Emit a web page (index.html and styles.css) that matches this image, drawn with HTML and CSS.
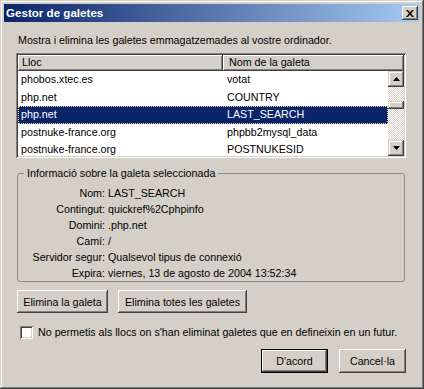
FILE: index.html
```html
<!DOCTYPE html>
<html lang="ca">
<head>
<meta charset="utf-8">
<title>Gestor de galetes</title>
<link rel="stylesheet" href="styles.css">
</head>
<body>
<div class="window">
  <div class="titlebar">
    <span class="title">Gestor de galetes</span>
    <button class="close" type="button" aria-label="Tanca">
      <svg width="8" height="7" viewBox="0 0 8 7"><path d="M0 0h2l2 2.5L6 0h2L5 3.5 8 7H6L4 4.5 2 7H0l3-3.5z" fill="#000"/></svg>
    </button>
  </div>
  <div class="content">
    <p class="desc">Mostra i elimina les galetes emmagatzemades al vostre ordinador.</p>
    <div class="tree">
      <div class="thead">
        <div class="th c1">Lloc</div>
        <div class="th c2">Nom de la galeta</div>
      </div>
      <div class="tbody">
        <div class="rows">
          <div class="row"><span class="c1">phobos.xtec.es</span><span class="c2">votat</span></div>
          <div class="row"><span class="c1">php.net</span><span class="c2">COUNTRY</span></div>
          <div class="row sel"><span class="c1">php.net</span><span class="c2">LAST_SEARCH</span></div>
          <div class="row"><span class="c1">postnuke-france.org</span><span class="c2">phpbb2mysql_data</span></div>
          <div class="row"><span class="c1">postnuke-france.org</span><span class="c2">POSTNUKESID</span></div>
        </div>
        <div class="scrollbar">
          <div class="sbtn"><svg width="7" height="4" viewBox="0 0 7 4"><path d="M3.5 0L7 4H0z" fill="#000"/></svg></div>
          <div class="track t1"></div>
          <div class="thumb"></div>
          <div class="track t2"></div>
          <div class="sbtn"><svg width="7" height="4" viewBox="0 0 7 4"><path d="M0 0h7L3.5 4z" fill="#000"/></svg></div>
        </div>
      </div>
    </div>
    <fieldset class="group">
      <legend>Informació sobre la galeta seleccionada</legend>
      <div class="info">
        <span class="lbl">Nom:</span><span class="val">LAST_SEARCH</span>
        <span class="lbl">Contingut:</span><span class="val">quickref%2Cphpinfo</span>
        <span class="lbl">Domini:</span><span class="val">.php.net</span>
        <span class="lbl">Camí:</span><span class="val">/</span>
        <span class="lbl">Servidor segur:</span><span class="val">Qualsevol tipus de connexió</span>
        <span class="lbl">Expira:</span><span class="val">viernes, 13 de agosto de 2004 13:52:34</span>
      </div>
    </fieldset>
    <div class="actions">
      <button class="btn b1" type="button">Elimina la galeta</button>
      <button class="btn b2" type="button">Elimina totes les galetes</button>
    </div>
    <label class="check"><span class="box"></span><span>No permetis als llocs on s'han eliminat galetes que en defineixin en un futur.</span></label>
    <div class="footer">
      <button class="btn ok" type="button">D'acord</button>
      <button class="btn cancel" type="button">Cancel·la</button>
    </div>
  </div>
</div>
</body>
</html>
```
FILE: styles.css
```css
html, body {
  margin: 0;
  padding: 0;
  background: #d4d0c8;
}
body {
  font-family: "Liberation Sans", Arial, sans-serif;
  font-size: 10.7px;
  color: #000;
}
.window {
  width: 424px;
  height: 389px;
  box-sizing: border-box;
  padding: 4px;
  background: #d4d0c8;
  box-shadow: inset -1px -1px #404040, inset 1px 1px #d4d0c8, inset -2px -2px #808080, inset 2px 2px #fff;
}
.titlebar {
  height: 18px;
  display: flex;
  align-items: center;
  justify-content: space-between;
  background: linear-gradient(to right, #0a246a, #a6caf0);
  padding: 0 2px 0 2px;
}
.title {
  color: #fff;
  font-weight: bold;
  font-size: 11.6px;
  line-height: 18px;
}
.close {
  width: 16px;
  height: 14px;
  padding: 0;
  border: 0;
  background: #d4d0c8;
  display: flex;
  align-items: center;
  justify-content: center;
  box-shadow: inset -1px -1px #404040, inset 1px 1px #fff, inset -2px -2px #808080;
}
.close svg { display: block; margin-left: -1px; }
.content {
  padding: 11px 14px 0 12px;
}
.desc {
  margin: 0 0 6px 2px;
  line-height: 14px;
}
.tree {
  width: 390px;
  height: 105px;
  box-sizing: border-box;
  padding: 2px;
  background: #fff;
  box-shadow: inset 1px 1px #808080, inset -1px -1px #fff, inset 2px 2px #404040, inset -2px -2px #d4d0c8;
  display: flex;
  flex-direction: column;
}
.thead {
  display: flex;
  height: 16px;
}
.th {
  box-sizing: border-box;
  height: 16px;
  line-height: 15px;
  background: #d4d0c8;
  box-shadow: inset -1px -1px #404040, inset 1px 1px #fff, inset -2px -2px #808080;
  white-space: nowrap;
}
.th.c1 { width: 205px; padding-left: 4px; }
.th.c2 { flex: 1; padding-left: 6px; }
.tbody {
  flex: 1;
  display: flex;
  overflow: hidden;
}
.rows {
  width: 370px;
  overflow: hidden;
}
.row {
  display: flex;
  height: 17.5px;
  line-height: 17.5px;
  box-sizing: border-box;
  white-space: nowrap;
}
.row .c1 { width: 205px; padding-left: 3px; box-sizing: border-box; }
.row .c2 { flex: 1; padding-left: 4px; }
.row.sel {
  background: #0a246a;
  color: #fff;
  outline: 1px dotted #f5db95;
  outline-offset: -1px;
}
.scrollbar {
  width: 16px;
  display: flex;
  flex-direction: column;
}
.sbtn {
  height: 16px;
  flex: none;
  background: #d4d0c8;
  box-shadow: inset -1px -1px #404040, inset 1px 1px #d4d0c8, inset -2px -2px #808080, inset 2px 2px #fff;
  display: flex;
  align-items: center;
  justify-content: center;
}
.track {
  background-image: conic-gradient(#fff 25%, #d4d0c8 0 50%, #fff 0 75%, #d4d0c8 0);
  background-size: 2px 2px;
}
.t1 { height: 14px; flex: none; }
.t2 { flex: 1; }
.thumb {
  height: 8px;
  flex: none;
  background: #d4d0c8;
  box-shadow: inset -1px -1px #404040, inset 1px 1px #d4d0c8, inset -2px -2px #808080, inset 2px 2px #fff;
}
.group {
  margin: 8px 0 0 1px;
  width: 388px;
  box-sizing: border-box;
  border: 1px solid #8a8a8a;
  border-radius: 3px;
  padding: 5px 0 0 0;
}
.group legend {
  padding: 0 3px;
  margin-left: 6px;
  line-height: 14px;
}
.info {
  display: grid;
  grid-template-columns: 87px auto;
  column-gap: 3px;
  line-height: 16px;
}
.lbl { text-align: right; white-space: nowrap; }
.val { white-space: nowrap; }
.actions {
  display: flex;
  gap: 10px;
  margin: 8px 0 0 1px;
}
.btn {
  font-family: inherit;
  font-size: 10.7px;
  color: #000;
  height: 23px;
  padding: 0;
  border: 0;
  background: #d4d0c8;
  box-shadow: inset -1px -1px #404040, inset 1px 1px #fff, inset -2px -2px #808080;
}
.b1 { width: 91px; }
.b2 { width: 129px; }
.check {
  display: flex;
  align-items: center;
  gap: 5px;
  margin: 12px 0 0 4px;
  line-height: 14px;
  white-space: nowrap;
}
.box {
  width: 13px;
  height: 13px;
  flex: none;
  background: #fff;
  box-shadow: inset 1px 1px #808080, inset -1px -1px #fff, inset 2px 2px #404040, inset -2px -2px #d4d0c8;
}
.footer {
  display: flex;
  justify-content: flex-end;
  gap: 11px;
  margin-top: 10px;
}
.ok, .cancel { width: 67px; height: 24px; }
.ok {
  box-shadow: inset 0 0 0 1px #000, inset -2px -2px #404040, inset 2px 2px #fff, inset -3px -3px #808080;
}
```
